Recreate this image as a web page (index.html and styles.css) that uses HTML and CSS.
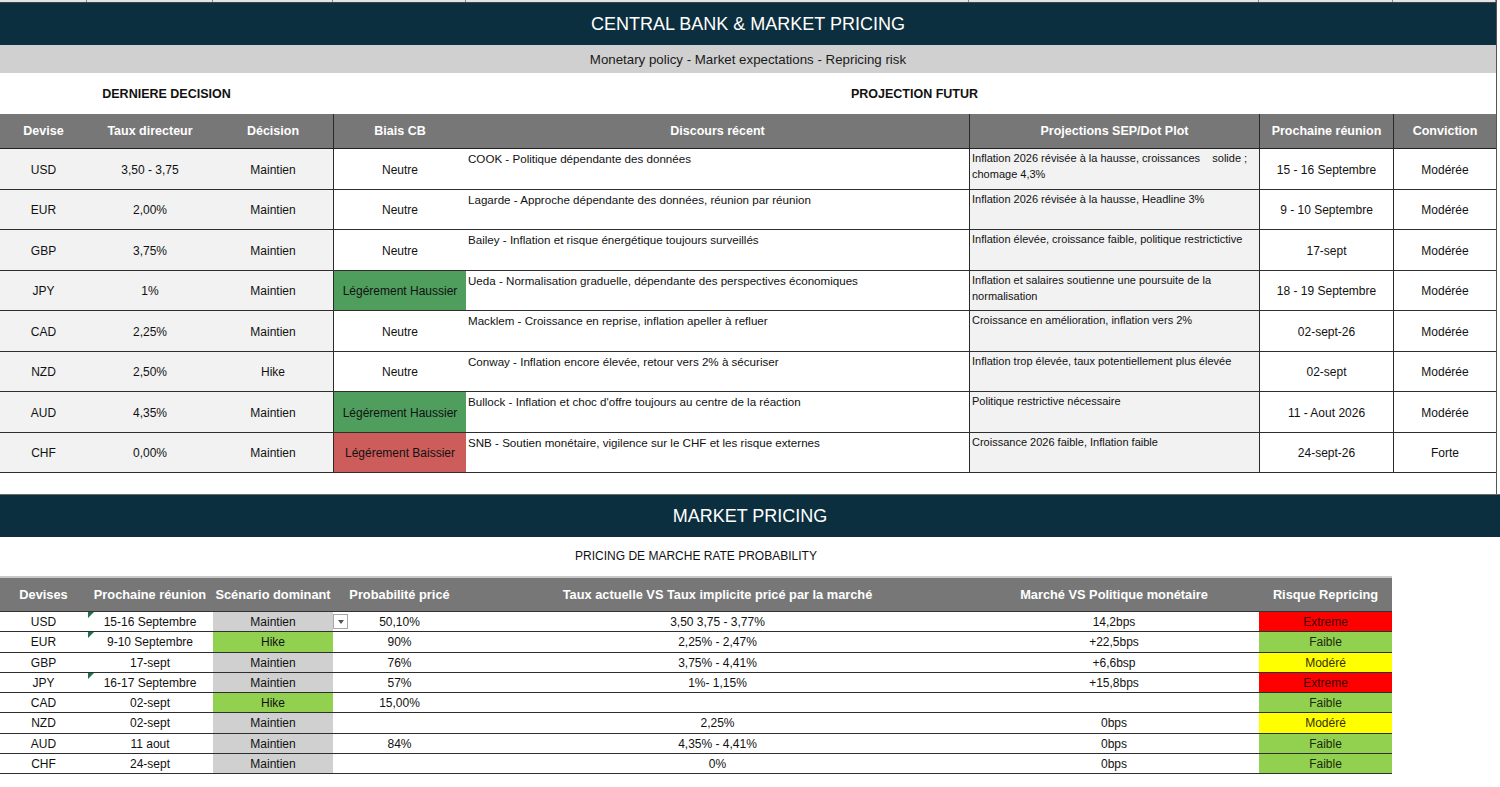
FILE: index.html
```html
<!DOCTYPE html>
<html lang="fr">
<head>
<meta charset="utf-8">
<title>Central Bank &amp; Market Pricing</title>
<link rel="stylesheet" href="styles.css">
</head>
<body>
<div class="sheet">
  <section class="cb">
    <div class="strip"><span></span><span></span><span></span><span></span><span></span><span></span><span></span><span></span></div>
    <div class="banner">CENTRAL BANK &amp; MARKET PRICING</div>
    <div class="subband">Monetary policy - Market expectations - Repricing risk</div>
    <div class="labels">
      <div class="lbl">DERNIERE DECISION</div>
      <div class="lbl">PROJECTION FUTUR</div>
    </div>
    <div class="t1">
      <div class="h">Devise</div>
      <div class="h">Taux directeur</div>
      <div class="h">Décision</div>
      <div class="h bl">Biais CB</div>
      <div class="h">Discours récent</div>
      <div class="h bl">Projections SEP/Dot Plot</div>
      <div class="h bl">Prochaine réunion</div>
      <div class="h bl">Conviction</div>

      <div class="c g">USD</div><div class="c g">3,50 - 3,75</div><div class="c g">Maintien</div>
      <div class="c bl">Neutre</div>
      <div class="d">COOK - Politique dépendante des données</div>
      <div class="p bl">Inflation 2026 révisée à la hausse, croissances&nbsp;&nbsp;&nbsp; solide ;<br>chomage 4,3%</div>
      <div class="c bl">15 - 16 Septembre</div><div class="c bl">Modérée</div>

      <div class="c g">EUR</div><div class="c g">2,00%</div><div class="c g">Maintien</div>
      <div class="c bl">Neutre</div>
      <div class="d">Lagarde - Approche dépendante des données, réunion par réunion</div>
      <div class="p bl">Inflation 2026 révisée à la hausse, Headline 3%</div>
      <div class="c bl">9 - 10 Septembre</div><div class="c bl">Modérée</div>

      <div class="c g">GBP</div><div class="c g">3,75%</div><div class="c g">Maintien</div>
      <div class="c bl">Neutre</div>
      <div class="d">Bailey - Inflation et risque énergétique toujours surveillés</div>
      <div class="p bl">Inflation élevée, croissance faible, politique restrictictive</div>
      <div class="c bl">17-sept</div><div class="c bl">Modérée</div>

      <div class="c g">JPY</div><div class="c g">1%</div><div class="c g">Maintien</div>
      <div class="c bl up">Légérement Haussier</div>
      <div class="d">Ueda - Normalisation graduelle, dépendante des perspectives économiques</div>
      <div class="p bl">Inflation et salaires soutienne une poursuite de la<br>normalisation</div>
      <div class="c bl">18 - 19 Septembre</div><div class="c bl">Modérée</div>

      <div class="c g">CAD</div><div class="c g">2,25%</div><div class="c g">Maintien</div>
      <div class="c bl">Neutre</div>
      <div class="d">Macklem - Croissance en reprise, inflation apeller à refluer</div>
      <div class="p bl">Croissance en amélioration, inflation vers 2%</div>
      <div class="c bl">02-sept-26</div><div class="c bl">Modérée</div>

      <div class="c g">NZD</div><div class="c g">2,50%</div><div class="c g">Hike</div>
      <div class="c bl">Neutre</div>
      <div class="d">Conway - Inflation encore élevée, retour vers 2% à sécuriser</div>
      <div class="p bl">Inflation trop élevée, taux potentiellement plus élevée</div>
      <div class="c bl">02-sept</div><div class="c bl">Modérée</div>

      <div class="c g">AUD</div><div class="c g">4,35%</div><div class="c g">Maintien</div>
      <div class="c bl up">Légérement Haussier</div>
      <div class="d">Bullock - Inflation et choc d'offre toujours au centre de la réaction</div>
      <div class="p bl">Politique restrictive nécessaire</div>
      <div class="c bl">11 - Aout 2026</div><div class="c bl">Modérée</div>

      <div class="c g">CHF</div><div class="c g">0,00%</div><div class="c g">Maintien</div>
      <div class="c bl down">Légérement Baissier</div>
      <div class="d">SNB - Soutien monétaire, vigilence sur le CHF et les risque externes</div>
      <div class="p bl">Croissance 2026 faible, Inflation faible</div>
      <div class="c bl">24-sept-26</div><div class="c bl">Forte</div>
    </div>
    <div class="spacer"></div>
  </section>

  <div class="banner banner2">MARKET PRICING</div>
  <div class="sub2">PRICING DE MARCHE RATE PROBABILITY</div>

  <div class="t2">
    <div class="h">Devises</div>
    <div class="h">Prochaine réunion</div>
    <div class="h">Scénario dominant</div>
    <div class="h">Probabilité pricé</div>
    <div class="h">Taux actuelle VS Taux implicite pricé par la marché</div>
    <div class="h">Marché VS Politique monétaire</div>
    <div class="h">Risque Repricing</div>

    <div class="c">USD</div><div class="c mk">15-16 Septembre</div><div class="c sm">Maintien</div>
    <div class="c dd-cell"><span class="dd"></span>50,10%</div>
    <div class="c">3,50 3,75 - 3,77%</div><div class="c">14,2bps</div><div class="c rx">Extreme</div>

    <div class="c">EUR</div><div class="c mk">9-10 Septembre</div><div class="c sh">Hike</div>
    <div class="c">90%</div><div class="c">2,25% - 2,47%</div><div class="c">+22,5bps</div><div class="c rf">Faible</div>

    <div class="c">GBP</div><div class="c">17-sept</div><div class="c sm">Maintien</div>
    <div class="c">76%</div><div class="c">3,75% - 4,41%</div><div class="c">+6,6bsp</div><div class="c rm">Modéré</div>

    <div class="c">JPY</div><div class="c mk">16-17 Septembre</div><div class="c sm">Maintien</div>
    <div class="c">57%</div><div class="c">1%- 1,15%</div><div class="c">+15,8bps</div><div class="c rx">Extreme</div>

    <div class="c">CAD</div><div class="c">02-sept</div><div class="c sh">Hike</div>
    <div class="c">15,00%</div><div class="c"></div><div class="c"></div><div class="c rf">Faible</div>

    <div class="c">NZD</div><div class="c">02-sept</div><div class="c sm">Maintien</div>
    <div class="c"></div><div class="c">2,25%</div><div class="c">0bps</div><div class="c rm">Modéré</div>

    <div class="c">AUD</div><div class="c">11 aout</div><div class="c sm">Maintien</div>
    <div class="c">84%</div><div class="c">4,35% - 4,41%</div><div class="c">0bps</div><div class="c rf">Faible</div>

    <div class="c">CHF</div><div class="c">24-sept</div><div class="c sm">Maintien</div>
    <div class="c"></div><div class="c">0%</div><div class="c">0bps</div><div class="c rf">Faible</div>
  </div>
</div>
</body>
</html>
```

FILE: styles.css
```css
* { box-sizing: border-box; }
html, body { margin: 0; padding: 0; background: #ffffff; }
body {
  font-family: "Liberation Sans", Arial, sans-serif;
  font-size: 12px;
  color: #111111;
  width: 1500px;
  height: 787px;
  overflow: hidden;
}
.sheet { width: 1500px; }

.cb {
  width: 1497px;
  border-right: 1px solid #555;
}

.strip {
  height: 3px;
  display: grid;
  grid-template-columns: 87px 126px 120px 133px 503px 290px 134px 103px;
  background: #e4e4e4;
  border-bottom: 1px solid #444;
}
.strip span { border-right: 1px solid #8a8a8a; }

.banner {
  height: 42px;
  background: #0c2f3f;
  color: #ffffff;
  font-size: 18px;
  display: flex;
  align-items: center;
  justify-content: center;
  padding-top: 1px;
}
.banner2 {
  width: 1500px;
  height: 43px;
  border-top: 1px solid #6b6b6b;
}

.subband {
  height: 28px;
  background: #d0d0d0;
  display: flex;
  align-items: center;
  justify-content: center;
  font-size: 13.3px;
  color: #1a1a1a;
}

.labels {
  height: 41px;
  display: grid;
  grid-template-columns: 333px 1fr;
}
.lbl {
  font-weight: bold;
  font-size: 12.5px;
  display: flex;
  align-items: center;
  justify-content: center;
  color: #111;
}

.t1 {
  display: grid;
  grid-template-columns: 87px 126px 120px 133px 503px 290px 134px 103px;
  grid-template-rows: 35px repeat(8, 40.5px);
}
.t2 {
  width: 1392px;
  display: grid;
  grid-template-columns: 87px 126px 120px 133px 503px 290px 133px;
  grid-template-rows: 34px repeat(8, 20.25px);
  border-top: 2px solid #c9c9c9;
}

.h {
  background: #777777;
  color: #ffffff;
  font-weight: bold;
  font-size: 12.5px;
  display: flex;
  align-items: center;
  justify-content: center;
  border-bottom: 1px solid #222;
  white-space: nowrap;
}
.t2 .h { font-size: 12.8px; border-bottom: 1px solid #333; }

.c {
  display: flex;
  align-items: center;
  justify-content: center;
  border-bottom: 1px solid #2e2e2e;
  white-space: nowrap;
}
.t1 .c { padding-top: 2px; }
.t1 > div:nth-child(n+9) { border-bottom: 1px solid #2e2e2e; }
.bl { border-left: 1px solid #2a2a2a; }
.g { background: #f2f2f2; }

.d {
  padding: 1px 2px 0 2px;
  font-size: 11.6px;
  line-height: 17px;
  white-space: nowrap;
}
.p {
  background: #f2f2f2;
  font-size: 11px;
  line-height: 16px;
  padding: 1px 2px 0 2px;
  color: #111;
  white-space: nowrap;
}

.up { background: #4f9e5e; }
.down { background: #cd5d5b; }

.spacer { height: 21px; }

.sub2 {
  width: 1392px;
  height: 39px;
  display: flex;
  align-items: center;
  justify-content: center;
  font-size: 12px;
  padding-bottom: 2px;
}

.t2 .c { padding-top: 1px; }
.sm { background: #d0d0d0; }
.sh { background: #92d050; }
.rx { background: #ff0000; color: #3d0000; }
.rf { background: #92d050; color: #1a2a0c; }
.rm { background: #ffff00; color: #333000; }

.mk { position: relative; }
.mk::before {
  content: "";
  position: absolute;
  left: 1px;
  top: 0;
  border-top: 6px solid #217346;
  border-right: 6px solid transparent;
}

.dd-cell { position: relative; }
.dd {
  position: absolute;
  left: 0;
  top: 2px;
  width: 15px;
  height: 15px;
  background: #fff;
  border: 1px solid #a8a8a8;
}
.dd::after {
  content: "";
  position: absolute;
  left: 3.5px;
  top: 5px;
  border-top: 4px solid #555;
  border-left: 3.5px solid transparent;
  border-right: 3.5px solid transparent;
}
```
